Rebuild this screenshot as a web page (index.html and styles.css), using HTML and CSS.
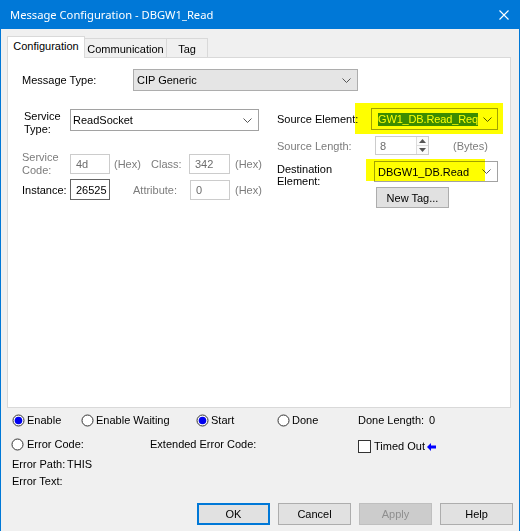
FILE: index.html
```html
<!DOCTYPE html>
<html lang="en">
<head>
  <meta charset="UTF-8">
  <title>Message Configuration - DBGW1_Read</title>
  <link rel="stylesheet" href="styles.css">
</head>
<body>
<div class="window">
  <div class="titlebar">
    <span class="title">Message Configuration - DBGW1_Read</span>
    <svg class="close" width="10" height="10" viewBox="0 0 10 10"><path d="M0.5 0.5 L9.5 9.5 M9.5 0.5 L0.5 9.5" stroke="#fff" stroke-width="1.1" fill="none"/></svg>
  </div>

  <div class="tabs">
    <div class="tab active">Configuration</div>
    <div class="tab tab-comm">Communication</div>
    <div class="tab tab-tag">Tag</div>
  </div>

  <div class="panel">
    <div class="row msg-row">
      <span class="msg-lbl">Message Type:</span>
      <div class="combo combo-grey msg-combo">
        <span>CIP Generic</span>
        <svg width="9" height="5" viewBox="0 0 9 5"><path d="M0.5 0.5 L4.5 4.5 L8.5 0.5" stroke="#555" fill="none"/></svg>
      </div>
    </div>

    <div class="columns">
      <div class="col-left">
        <div class="row svc-type">
          <span class="lbl two-line">Service<br>Type:</span>
          <div class="combo svc-combo">
            <span>ReadSocket</span>
            <svg width="9" height="5" viewBox="0 0 9 5"><path d="M0.5 0.5 L4.5 4.5 L8.5 0.5" stroke="#555" fill="none"/></svg>
          </div>
        </div>

        <div class="row svc-code">
          <span class="lbl two-line grey">Service<br>Code:</span>
          <div class="field disabled">4d</div>
          <span class="grey hex">(Hex)</span>
          <span class="grey class-lbl">Class:</span>
          <div class="field disabled field-class">342</div>
          <span class="grey hex-end">(Hex)</span>
        </div>

        <div class="row inst">
          <span class="lbl">Instance:</span>
          <div class="field field-inst">26525</div>
          <span class="grey attr-lbl">Attribute:</span>
          <div class="field disabled field-attr">0</div>
          <span class="grey hex-end">(Hex)</span>
        </div>
      </div>

      <div class="col-right">
        <div class="row src-row">
          <span class="rlbl src-lbl">Source Element:</span>
          <div class="combo src-combo">
            <span class="sel">GW1_DB.Read_Req</span>
            <svg width="9" height="5" viewBox="0 0 9 5"><path d="M0.5 0.5 L4.5 4.5 L8.5 0.5" stroke="#555" fill="none"/></svg>
          </div>
        </div>

        <div class="row len-row">
          <span class="rlbl len-lbl grey">Source Length:</span>
          <div class="spin">
            <span>8</span>
            <div class="spin-btns">
              <div class="spin-btn"><svg width="7" height="4" viewBox="0 0 7 4"><path d="M0 4 L3.5 0 L7 4 Z" fill="#555"/></svg></div>
              <div class="spin-btn"><svg width="7" height="4" viewBox="0 0 7 4"><path d="M0 0 L3.5 4 L7 0 Z" fill="#555"/></svg></div>
            </div>
          </div>
          <span class="grey bytes">(Bytes)</span>
        </div>

        <div class="row dst-row">
          <span class="rlbl dst-lbl">Destination<br>Element:</span>
          <div class="combo dst-combo">
            <span>DBGW1_DB.Read</span>
            <svg width="9" height="5" viewBox="0 0 9 5"><path d="M0.5 0.5 L4.5 4.5 L8.5 0.5" stroke="#555" fill="none"/></svg>
          </div>
        </div>

        <div class="btn new-tag">New Tag...</div>
      </div>
    </div>

    <!-- highlighter marks drawn over the two tag fields -->
    <div class="marker marker-src"></div>
    <div class="marker marker-dst"></div>
  </div>

  <div class="status">
    <div class="status-row row-one">
      <div class="opt opt-enable">
        <svg class="radio" width="13" height="13" viewBox="0 0 13 13"><circle cx="6.5" cy="6.5" r="5.5" fill="#fff" stroke="#333"/><circle cx="6.5" cy="6.5" r="3.8" fill="#0000f0"/></svg>
        <span>Enable</span>
      </div>
      <div class="opt opt-wait">
        <svg class="radio" width="13" height="13" viewBox="0 0 13 13"><circle cx="6.5" cy="6.5" r="5.5" fill="#fff" stroke="#333"/></svg>
        <span>Enable Waiting</span>
      </div>
      <div class="opt opt-start">
        <svg class="radio" width="13" height="13" viewBox="0 0 13 13"><circle cx="6.5" cy="6.5" r="5.5" fill="#fff" stroke="#333"/><circle cx="6.5" cy="6.5" r="3.8" fill="#0000f0"/></svg>
        <span>Start</span>
      </div>
      <div class="opt opt-done">
        <svg class="radio" width="13" height="13" viewBox="0 0 13 13"><circle cx="6.5" cy="6.5" r="5.5" fill="#fff" stroke="#333"/></svg>
        <span>Done</span>
      </div>
      <div class="opt">
        <span class="done-len">Done Length:</span>
        <span>0</span>
      </div>
    </div>

    <div class="status-row row-two">
      <div class="opt opt-err">
        <svg class="radio" width="13" height="13" viewBox="0 0 13 13"><circle cx="6.5" cy="6.5" r="5.5" fill="#fff" stroke="#333"/></svg>
        <span>Error Code:</span>
      </div>
      <div class="opt opt-ext">Extended Error Code:</div>
      <div class="opt opt-timed">
        <span class="check"></span>
        <span>Timed Out</span>
        <svg class="arrow" width="9" height="8" viewBox="0 0 9 8"><path d="M0 4 L4 0 L4 2.5 L9 2.5 L9 5.5 L4 5.5 L4 8 Z" fill="#0000ff"/></svg>
      </div>
    </div>

    <div class="err-line err-path"><span class="err-lbl">Error Path:</span><span>THIS</span></div>
    <div class="err-line err-text"><span class="err-lbl">Error Text:</span></div>
  </div>

  <div class="buttons">
    <div class="btn dlg-btn default">OK</div>
    <div class="btn dlg-btn">Cancel</div>
    <div class="btn dlg-btn disabled-btn">Apply</div>
    <div class="btn dlg-btn">Help</div>
  </div>
</div>
</body>
</html>
```

FILE: styles.css
```css
* {
  margin: 0;
  padding: 0;
  box-sizing: border-box;
}

body {
  background: #f0f0f0;
  font-family: "Liberation Sans", Arial, sans-serif;
  font-size: 11px;
  color: #000;
}

.window {
  width: 520px;
  height: 531px;
  background: #f0f0f0;
  border-left: 1px solid #0078d7;
  border-right: 1px solid #0078d7;
  overflow: hidden;
}

.titlebar {
  height: 29px;
  background: #0078d7;
  display: flex;
  align-items: center;
  padding-left: 9px;
  color: #fff;
}

.title {
  font-family: "Noto Sans", sans-serif;
  font-size: 11.2px;
}

.close {
  margin-left: auto;
  margin-right: 10px;
}

/* tabs */
.tabs {
  display: flex;
  align-items: flex-end;
  height: 22px;
  margin: 7px 0 0 6px;
}

.tab {
  height: 20px;
  margin-left: -1px;
  padding-top: 1px;
  border: 1px solid #d9d9d9;
  border-bottom: none;
  background: #f0f0f0;
  display: flex;
  align-items: center;
  justify-content: center;
}

.tab.active {
  position: relative;
  z-index: 2;
  width: 78px;
  height: 22px;
  margin-left: 0;
  padding: 0 0 3px;
  background: #fff;
}

.tab-comm {
  width: 83px;
}

.tab-tag {
  width: 42px;
}

.panel {
  position: relative;
  width: 504px;
  height: 351px;
  margin: -1px 0 0 6px;
  background: #fff;
  border: 1px solid #d9d9d9;
}

.row {
  display: flex;
}

.grey {
  color: #7c7c7c;
}

.msg-row {
  align-items: center;
  margin: 11px 0 0 14px;
}

.msg-lbl {
  width: 111px;
}

.combo {
  display: flex;
  align-items: center;
  height: 22px;
  padding-left: 2px;
  border: 1px solid #a2a2a2;
  background: #fff;
  white-space: nowrap;
}

.combo svg {
  margin-left: auto;
  margin-right: 6px;
  flex-shrink: 0;
}

.combo-grey {
  padding-left: 3px;
  background: #e5e5e5;
  border-color: #adadad;
}

.msg-combo {
  width: 225px;
}

.columns {
  display: flex;
  margin-top: 17px;
}

.col-left {
  width: 268px;
  padding: 1px 0 0 14px;
}

.lbl {
  width: 48px;
  flex-shrink: 0;
}

.two-line {
  line-height: 13px;
}

.svc-type {
  align-items: flex-start;
}

.svc-type .lbl {
  padding-left: 2px;
  margin-top: 1px;
}

.svc-combo {
  width: 189px;
}

.svc-code {
  align-items: center;
  margin-top: 15px;
}

.field {
  width: 40px;
  height: 20px;
  padding-left: 5px;
  border: 1px solid #cccccc;
  background: #fff;
  display: flex;
  align-items: center;
}

.field.disabled {
  color: #6d6d6d;
}

.hex {
  width: 37px;
  margin-left: 4px;
}

.class-lbl {
  width: 38px;
}

.field-class {
  width: 41px;
}

.hex-end {
  margin-left: 5px;
}

.inst {
  align-items: center;
  margin-top: 2px;
}

.field-inst {
  height: 21px;
  border-color: #646464;
}

.attr-lbl {
  width: 57px;
  margin-left: 23px;
}

/* right column */
.col-right {
  flex: 1;
}

.rlbl {
  padding-left: 1px;
  flex-shrink: 0;
}

.src-row {
  align-items: center;
}

.src-lbl {
  width: 95px;
}

.src-combo {
  width: 127px;
  padding-left: 6px;
}

.src-combo svg {
  margin-right: 5px;
}

.sel {
  flex-shrink: 0;
  height: 13px;
  line-height: 13px;
  letter-spacing: -0.15px;
  background: #3c8c00;
  color: #fff;
}

.len-row {
  align-items: center;
  margin-top: 6px;
}

.len-lbl {
  width: 99px;
}

.spin {
  display: flex;
  align-items: center;
  width: 54px;
  height: 19px;
  padding-left: 4px;
  border: 1px solid #cccccc;
  color: #6d6d6d;
}

.spin-btns {
  display: flex;
  flex-direction: column;
  margin-left: auto;
  width: 12px;
  height: 100%;
}

.spin-btn {
  flex: 1;
  display: flex;
  align-items: center;
  justify-content: center;
  border-left: 1px solid #dcdcdc;
  background: #fbfbfb;
}

.spin-btn + .spin-btn {
  border-top: 1px solid #dcdcdc;
}

.bytes {
  margin-left: 24px;
}

.dst-row {
  align-items: flex-start;
  margin-top: 6px;
}

.dst-lbl {
  width: 98px;
  margin-top: 2px;
  line-height: 12px;
}

.dst-combo {
  width: 124px;
  height: 21px;
  padding-left: 3px;
}

.btn {
  display: flex;
  align-items: center;
  justify-content: center;
  height: 21px;
  border: 1px solid #adadad;
  background: #e1e1e1;
}

.new-tag {
  width: 73px;
  margin-left: 100px;
}

.marker {
  position: absolute;
  background: #ffff00;
  mix-blend-mode: multiply;
}

.marker-src {
  left: 347px;
  top: 45px;
  width: 148px;
  height: 31px;
}

.marker-dst {
  left: 358px;
  top: 101px;
  width: 119px;
  height: 22px;
}

/* status area */
.status {
  padding-left: 11px;
}

.status-row {
  display: flex;
  align-items: center;
}

.row-one {
  height: 13px;
  margin-top: 6px;
}

.opt {
  display: flex;
  align-items: center;
  line-height: 13px;
  white-space: nowrap;
}

.radio {
  margin-right: 2px;
  flex-shrink: 0;
}

.opt-enable {
  width: 69px;
}

.opt-wait {
  width: 115px;
}

.opt-start,
.opt-done {
  width: 81px;
}

.done-len {
  width: 71px;
}

.row-two {
  align-items: flex-start;
  margin-top: 11px;
}

.opt-err {
  width: 139px;
  margin-left: -1px;
}

.opt-err .radio {
  margin-right: 3px;
}

.opt-ext {
  width: 208px;
}

.opt-timed {
  margin-top: 2px;
}

.check {
  width: 13px;
  height: 13px;
  margin-right: 3px;
  border: 1px solid #333;
  background: #fff;
}

.arrow {
  margin-left: 2px;
}

.err-line {
  display: flex;
  line-height: 13px;
}

.err-path {
  margin-top: 5px;
}

.err-text {
  margin-top: 4px;
}

.err-lbl {
  width: 55px;
}

.buttons {
  display: flex;
  justify-content: flex-end;
  gap: 8px;
  margin-top: 15px;
  padding-right: 6px;
}

.dlg-btn {
  width: 73px;
  height: 22px;
}

.default {
  border: 2px solid #0078d7;
}

.disabled-btn {
  background: #cccccc;
  border-color: #bfbfbf;
  color: #8f8f8f;
}
```
